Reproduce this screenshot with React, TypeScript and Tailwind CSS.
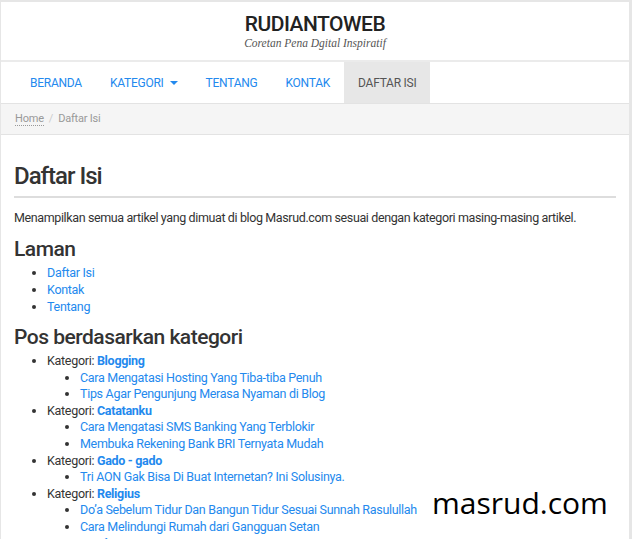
import React from "react";

const pages = ["Daftar Isi", "Kontak", "Tentang"];

const categories = [
  {
    name: "Blogging",
    posts: [
      "Cara Mengatasi Hosting Yang Tiba-tiba Penuh",
      "Tips Agar Pengunjung Merasa Nyaman di Blog",
    ],
  },
  {
    name: "Catatanku",
    posts: [
      "Cara Mengatasi SMS Banking Yang Terblokir",
      "Membuka Rekening Bank BRI Ternyata Mudah",
    ],
  },
  {
    name: "Gado - gado",
    posts: ["Tri AON Gak Bisa Di Buat Internetan? Ini Solusinya."],
  },
  {
    name: "Religius",
    posts: [
      "Do’a Sebelum Tidur Dan Bangun Tidur Sesuai Sunnah Rasulullah",
      "Cara Melindungi Rumah dari Gangguan Setan",
    ],
  },
  {
    name: "Tips Umum",
    posts: ["Cara Mudah Membuat Blog"],
  },
];

const navItems = ["BERANDA", "KATEGORI", "TENTANG", "KONTAK", "DAFTAR ISI"];

const App: React.FC = () => {
  return (
    <div
      className="h-[539px] w-[632px] overflow-hidden bg-[#e6e6e6] pt-[2px] pl-px pr-[3px] text-[#333]"
      style={{ fontFamily: "Roboto, 'Liberation Sans', sans-serif" }}
    >
      <div className="relative h-full bg-white">
        {/* header */}
        <div className="flex h-[60px] flex-col items-center border-b-2 border-[#ebebeb] pt-[9px]">
          <h1 className="text-[21px] leading-[26px] font-medium tracking-[-0.5px] text-[#222]">
            RUDIANTOWEB
          </h1>
          <p
            className="text-[11.5px] leading-[12px] italic text-[#555]"
            style={{ fontFamily: "'Liberation Serif', serif" }}
          >
            Coretan Pena Dgital Inspiratif
          </p>
        </div>

        {/* nav */}
        <ul className="flex h-[42px] border-b border-[#e3e3e3] pl-[15px] text-[12px] tracking-[-0.25px]">
          {navItems.map((item) => {
            const active = item === "DAFTAR ISI";
            return (
              <li
                key={item}
                className={`flex items-center px-[14px] ${
                  active ? "bg-[#e7e7e7] text-[#555]" : "text-[#2389ee]"
                }`}
              >
                {item}
                {item === "KATEGORI" && (
                  <span className="ml-[6px] inline-block h-0 w-0 border-x-[4px] border-t-[4px] border-x-transparent border-t-[#2389ee]" />
                )}
              </li>
            );
          })}
        </ul>

        {/* breadcrumb */}
        <div className="flex h-[31px] items-center border-b border-[#e3e3e3] bg-[#f5f5f5] pl-[14px] text-[11px] tracking-[-0.2px] text-[#999]">
          <span className="border-b border-dotted border-[#999] leading-[12px]">
            Home
          </span>
          <span className="px-[5px] text-[#ccc]">/</span>
          <span>Daftar Isi</span>
        </div>

        {/* content */}
        <div className="px-[13px] pt-[26px]">
          <h2 className="text-[24px] leading-[30px] font-medium tracking-[-1px] text-[#333]">
            Daftar Isi
          </h2>
          <div className="mt-[5px] h-[2px] bg-[#ddd]" />
          <p className="mt-[11px] text-[12.5px] leading-[17px] tracking-[-0.38px]">
            Menampilkan semua artikel yang dimuat di blog Masrud.com sesuai
            dengan kategori masing-masing artikel.
          </p>

          <h3 className="mt-[10px] text-[21px] leading-[26px] font-medium tracking-[-0.5px]">
            Laman
          </h3>
          <ul className="mt-[2px] list-disc pl-[33px] text-[12.5px] leading-[17px] tracking-[-0.3px] text-[#2389ee] marker:text-[#333]">
            {pages.map((p) => (
              <li key={p}>{p}</li>
            ))}
          </ul>

          <h3 className="mt-[9px] text-[21px] leading-[26px] font-medium tracking-[-0.5px]">
            Pos berdasarkan kategori
          </h3>
          <ul className="mt-[3px] list-disc pl-[33px] text-[12.5px] leading-[16.6px] tracking-[-0.3px]">
            {categories.map((c) => (
              <li key={c.name}>
                Kategori:{" "}
                <span className="font-bold text-[#2389ee]">{c.name}</span>
                <ul className="list-disc pl-[33px] text-[#2389ee] marker:text-[#333]">
                  {c.posts.map((p) => (
                    <li key={p}>{p}</li>
                  ))}
                </ul>
              </li>
            ))}
          </ul>
        </div>

        {/* watermark */}
        <div
          className="absolute left-[431px] top-[481px] text-[30px] leading-[40px] text-black"
          style={{ fontFamily: "'Open Sans', sans-serif" }}
        >
          masrud.com
        </div>
      </div>
    </div>
  );
};

export default App;
